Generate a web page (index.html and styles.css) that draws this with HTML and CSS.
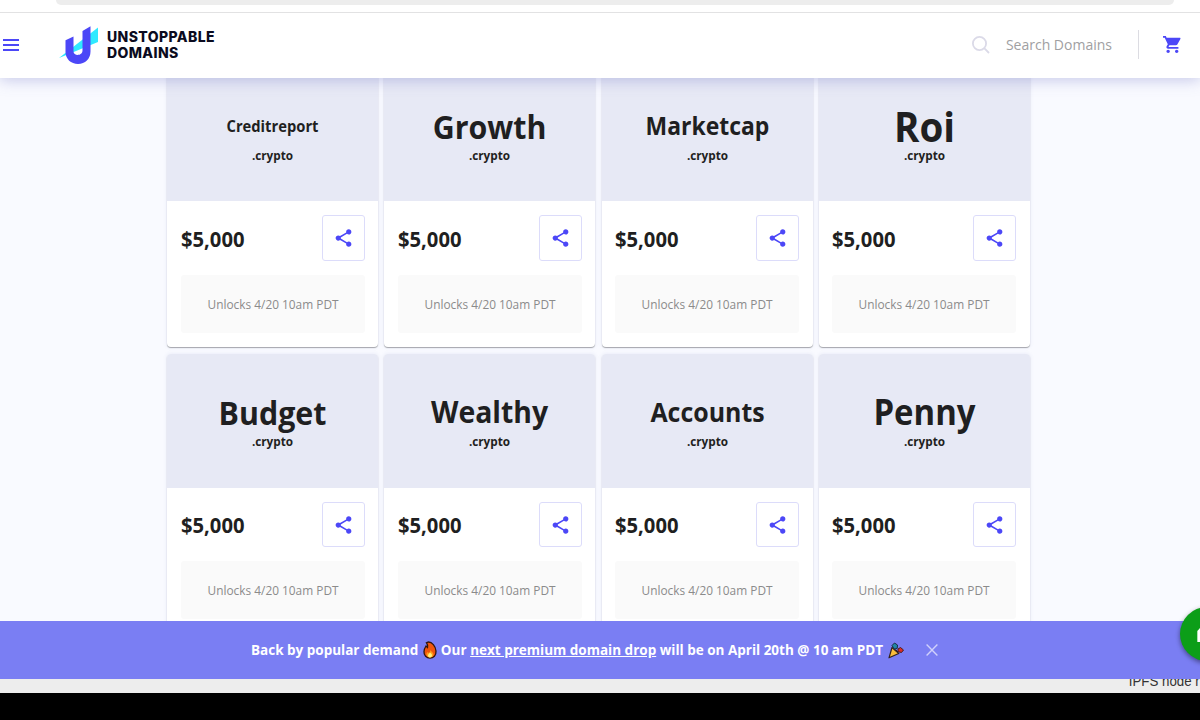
FILE: index.html
```html
<!DOCTYPE html>
<html lang="en">
  <head>
    <meta charset="utf-8" />
    <title>Unstoppable Domains</title>
    <link rel="stylesheet" href="styles.css" />
  </head>
  <body>
    <svg class="defs" width="0" height="0">
      <symbol id="share" viewBox="0 0 24 24">
        <path d="M18 16.1c-.8 0-1.400.3-2 .8l-7.100-4.200c.1-.2.1-.5.1-.7s0-.5-.1-.7L16 7.200c.5.500 1.200.8 2 .8 1.700 0 3-1.300 3-3s-1.300-3-3-3-3 1.300-3 3c0 .2 0 .5.1.7L8 9.800C7.500 9.300 6.800 9 6 9c-1.700 0-3 1.300-3 3s1.300 3 3 3c.8 0 1.500-.3 2-.8l7.100 4.200c-.1.200-.1.400-.1.600 0 1.600 1.300 2.900 3 2.900s3-1.300 3-2.900-1.300-2.900-3-2.900z" />
      </symbol>
    </svg>

    <div class="browser-bar"><div class="url"></div></div>

    <header class="header">
      <svg class="menu" viewBox="0 0 16 12"><path d="M0 1h16M0 6h16M0 11h16" /></svg>
      <svg class="logo" viewBox="0 0 40 38">
        <path class="logo-light" d="M0 32 L39 1.500 V16 Z" />
        <path class="logo-dark" d="M6.500 14.300 L14.500 10.500 V25.500 C14.500 30.200 23.500 30.200 23.500 24.500 V5 L31.500 .3 V25.500 C31.500 33 26 38 19 38 C12 38 6.500 33 6.500 26 Z" />
      </svg>
      <div class="brand">UNSTOPPABLE<br />DOMAINS</div>
      <div class="search">
        <svg viewBox="0 0 18 18"><circle cx="7.500" cy="7.500" r="6.600" /><path d="M12.200 12.200 17 17" /></svg>
        <span>Search Domains</span>
      </div>
      <svg class="cart" viewBox="1 2 21 20">
        <path d="M7 18c-1.100 0-2 .9-2 2s.9 2 2 2 2-.9 2-2-.9-2-2-2zM1 2v2h2l3.600 7.600-1.400 2.400C4.500 15.400 5.500 17 7 17h12v-2H7.400l1.100-2H16c.8 0 1.400-.4 1.700-1l3.600-6.500c.4-.7-.1-1.500-.8-1.500H5.200L4.300 2H1zm16 16c-1.100 0-2 .9-2 2s.9 2 2 2 2-.9 2-2-.9-2-2-2z" />
      </svg>
    </header>

    <main class="main">
      <div class="cards">
        <div class="card">
          <div class="card-head"><div class="name creditreport">Creditreport</div><div class="tld">.crypto</div></div>
          <div class="card-body">
            <div class="price-row"><span class="price">$5,000</span><button class="share"><svg><use href="#share" /></svg></button></div>
            <div class="unlocks"><span>Unlocks 4/20 10am PDT</span></div>
          </div>
        </div>
        <div class="card">
          <div class="card-head"><div class="name growth">Growth</div><div class="tld">.crypto</div></div>
          <div class="card-body">
            <div class="price-row"><span class="price">$5,000</span><button class="share"><svg><use href="#share" /></svg></button></div>
            <div class="unlocks"><span>Unlocks 4/20 10am PDT</span></div>
          </div>
        </div>
        <div class="card">
          <div class="card-head"><div class="name marketcap">Marketcap</div><div class="tld">.crypto</div></div>
          <div class="card-body">
            <div class="price-row"><span class="price">$5,000</span><button class="share"><svg><use href="#share" /></svg></button></div>
            <div class="unlocks"><span>Unlocks 4/20 10am PDT</span></div>
          </div>
        </div>
        <div class="card">
          <div class="card-head"><div class="name roi">Roi</div><div class="tld">.crypto</div></div>
          <div class="card-body">
            <div class="price-row"><span class="price">$5,000</span><button class="share"><svg><use href="#share" /></svg></button></div>
            <div class="unlocks"><span>Unlocks 4/20 10am PDT</span></div>
          </div>
        </div>
        <div class="card">
          <div class="card-head"><div class="name budget">Budget</div><div class="tld">.crypto</div></div>
          <div class="card-body">
            <div class="price-row"><span class="price">$5,000</span><button class="share"><svg><use href="#share" /></svg></button></div>
            <div class="unlocks"><span>Unlocks 4/20 10am PDT</span></div>
          </div>
        </div>
        <div class="card">
          <div class="card-head"><div class="name wealthy">Wealthy</div><div class="tld">.crypto</div></div>
          <div class="card-body">
            <div class="price-row"><span class="price">$5,000</span><button class="share"><svg><use href="#share" /></svg></button></div>
            <div class="unlocks"><span>Unlocks 4/20 10am PDT</span></div>
          </div>
        </div>
        <div class="card">
          <div class="card-head"><div class="name accounts">Accounts</div><div class="tld">.crypto</div></div>
          <div class="card-body">
            <div class="price-row"><span class="price">$5,000</span><button class="share"><svg><use href="#share" /></svg></button></div>
            <div class="unlocks"><span>Unlocks 4/20 10am PDT</span></div>
          </div>
        </div>
        <div class="card">
          <div class="card-head"><div class="name penny">Penny</div><div class="tld">.crypto</div></div>
          <div class="card-body">
            <div class="price-row"><span class="price">$5,000</span><button class="share"><svg><use href="#share" /></svg></button></div>
            <div class="unlocks"><span>Unlocks 4/20 10am PDT</span></div>
          </div>
        </div>
      </div>
    </main>

    <div class="banner">
      <span>Back by popular demand</span>
      <svg class="fire" viewBox="0 0 14 18">
        <path d="M5.500 1C9 1 12.500 5 13 10c.3 4.500-2.500 7-6 7s-6.300-2.500-6-6.500C1.200 8 2 6.500 3 5l1.500 1.500C5 4.500 4.500 3 3.500 1.800z" fill="#f0560c" stroke="#30160f" stroke-width="1.300" />
        <path d="M7 9c1 1.500 3.500 2.500 3.500 4.500 0 2-1.500 2.900-3.500 2.900S3.300 15.200 3.500 13c.1-1 .7-1.500 1.200-2l1 1C7 11.500 7.300 10.500 7 9z" fill="#ff9c1a" />
        <path d="M7 11.500c1 1 2 1.500 2 3 0 1.200-.9 1.900-2 1.900s-2-.7-2-1.900c0-1.300 1.300-1.700 2-3z" fill="#fff27a" />
      </svg>
      <span>Our <a>next premium domain drop</a> will be on April 20th @ 10 am PDT</span>
      <svg class="party" viewBox="0 0 16 17">
        <path d="M1 15.800 4 5.500l6.800 6z" fill="#f9bd3b" stroke="#33221f" stroke-width="1.200" stroke-linejoin="round" />
        <path d="M4 3.500 6.500 1l3 2-.3 3.500-3 .5z" fill="#1f87a8" stroke="#1d2c43" />
        <path d="M10 7l2.500-1.500 3 2.500-2 2.500-3.500-.8z" fill="#dc2b27" stroke="#48201f" />
        <path d="M7.500 7.500 10 10" stroke="#33221f" />
      </svg>
      <svg class="close" viewBox="0 0 12 12"><path d="M.6.6l10.800 10.800M11.400.6.6 11.400" /></svg>
    </div>
    <footer class="status"><span>IPFS node r</span></footer>

    <div class="chat">
      <svg viewBox="0 0 24 18"><path d="M0 18V5.500L5 0h16a3 3 0 0 1 3 3v15z" /></svg>
    </div>
  </body>
</html>
```
FILE: styles.css
```css
* {
  box-sizing: border-box;
}

body {
  margin: 0;
  width: 1200px;
  height: 720px;
  overflow: hidden;
  position: relative;
  display: flex;
  flex-direction: column;
  background: #000;
  color: #1f1f21;
  font-family: 'Open Sans', 'Noto Sans', sans-serif;
}

svg {
  display: block;
  flex: none;
}

.defs {
  position: absolute;
}

.browser-bar {
  flex: none;
  height: 13px;
  padding: 0 26px 0 56px;
  background: #fff;
  border-bottom: 1px solid #e2e2e3;
  position: relative;
  z-index: 2;
}

.url {
  height: 4.500px;
  background: #ededed;
  border-radius: 0 0 12px 12px;
}

/* header */
.header {
  flex: none;
  height: 64.500px;
  padding: 0 19px 1px 3px;
  display: flex;
  align-items: center;
  background: #fff;
  position: relative;
  z-index: 1;
  box-shadow: 0 2px 14px rgba(100, 105, 190, 0.35);
}

.menu {
  width: 16px;
  height: 12px;
  stroke: #4c47f7;
  stroke-width: 1.800;
}

.logo {
  width: 40px;
  height: 38px;
  margin-left: 40px;
}

.logo-light {
  fill: #2fe9ff;
}

.logo-dark {
  fill: #4c47f7;
}

.brand {
  margin-left: 8px;
  font-family: Inter, sans-serif;
  font-size: 14px;
  font-weight: 800;
  line-height: 15.500px;
  letter-spacing: 0.400px;
  color: #0b0b20;
}

.search {
  margin-left: auto;
  height: 29px;
  padding-right: 26px;
  display: flex;
  align-items: center;
  gap: 16px;
  border-right: 1px solid #dcdce2;
  color: #a0a0a2;
  font-size: 14px;
}

.search svg {
  width: 18px;
  height: 18px;
  fill: none;
  stroke: #dbdae8;
  stroke-width: 1.800;
}

.cart {
  width: 18px;
  height: 19px;
  margin-left: 24px;
  fill: #4c47f7;
}

/* cards */
.main {
  flex: none;
  height: 543.500px;
  overflow: hidden;
  background: #f9faff;
}

.cards {
  margin: -10.100px 0 0 167.300px;
  display: grid;
  grid-template-columns: repeat(4, 211px);
  gap: 6.500px 6.200px;
}

.card {
  height: 280px;
  overflow: hidden;
  border-radius: 4px;
  background: #fff;
  box-shadow: 0 1px 1px rgba(0, 0, 0, 0.32), 0 0 4px rgba(90, 95, 180, 0.12);
}

.card-head {
  height: 134px;
  padding-top: 35.500px;
  background: #e7e9f5;
  text-align: center;
}

.name {
  height: 46px;
  line-height: 46px;
  font-weight: 700;
  transform: scaleX(0.94);
}

.creditreport {
  font-size: 15.700px;
}

.growth {
  font-size: 32.300px;
}

.marketcap {
  font-size: 24.400px;
}

.roi {
  font-size: 41px;
}

.budget {
  font-size: 32.300px;
}

.wealthy {
  font-size: 30.200px;
}

.accounts {
  font-size: 26.500px;
}

.penny {
  font-size: 35px;
}

.tld {
  height: 14px;
  line-height: 14px;
  font-size: 12.500px;
  font-weight: 700;
  transform: scaleX(0.94);
}

.card-body {
  padding: 14px 13.500px;
}

.price-row {
  display: flex;
  align-items: center;
  justify-content: space-between;
}

.price {
  font-size: 21.500px;
  font-weight: 700;
  transform: scaleX(0.94);
  transform-origin: left;
}

.share {
  width: 43px;
  height: 45.500px;
  padding: 0;
  display: flex;
  align-items: center;
  justify-content: center;
  background: #fff;
  border: 1px solid #dcdcfa;
  border-radius: 3px;
}

.share svg {
  width: 21px;
  height: 22px;
  fill: #4c47f7;
}

.unlocks {
  height: 58px;
  margin-top: 14px;
  line-height: 58px;
  background: #fafafa;
  border-radius: 3px;
  text-align: center;
  color: #8b8b8b;
  font-size: 12.700px;
}

.unlocks span {
  display: inline-block;
  transform: scaleX(0.935);
}

/* announcement */
.banner {
  flex: none;
  height: 58px;
  padding-left: 251px;
  display: flex;
  align-items: center;
  background: #7a7ef3;
  color: #fff;
  font-size: 13.500px;
  font-weight: 700;
  white-space: nowrap;
}

.banner a {
  text-decoration: underline;
}

.fire {
  width: 14px;
  height: 18px;
  margin: 0 4px 0 4.500px;
}

.party {
  width: 16px;
  height: 17px;
  margin-left: 5px;
}

.close {
  width: 12px;
  height: 12px;
  margin-left: 22px;
  stroke: #d0d1fb;
  stroke-width: 1.400;
}

.status {
  flex: none;
  height: 14px;
  overflow: hidden;
  display: flex;
  justify-content: flex-end;
  background: #ededed;
  color: #333;
  font: 14px/14px 'Liberation Sans', Arial, sans-serif;
}

.status span {
  margin-top: -5px;
  white-space: nowrap;
  transform: scaleX(0.95);
  transform-origin: right;
}

/* chat bubble, cut off by the window edge */
.chat {
  position: absolute;
  left: 1180px;
  top: 607px;
  width: 54px;
  height: 54px;
  padding: 19px 0 0 16px;
  border-radius: 50%;
  background: #0c9e18;
  box-shadow: 0 2px 5px rgba(0, 0, 0, 0.45);
}

.chat svg {
  width: 24px;
  height: 16px;
  fill: #fff;
}
```
